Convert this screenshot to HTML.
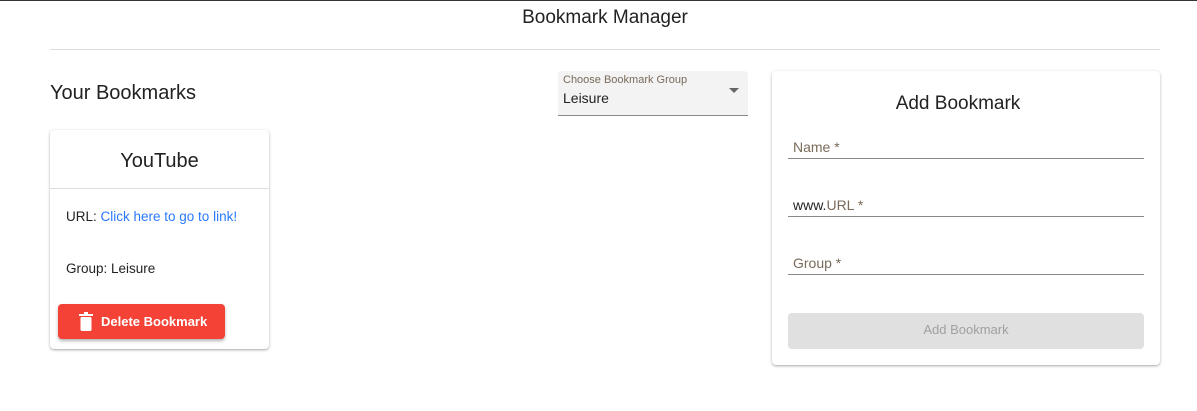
<!DOCTYPE html>
<html><head><style>
*{box-sizing:border-box;margin:0;padding:0}
body{width:1197px;height:411px;background:#fff;font-family:"Liberation Sans",sans-serif;color:#222;position:relative;overflow:hidden;border-top:1px solid #333}
.a{position:absolute}
.card{position:absolute;background:#fff;border-radius:4px;box-shadow:0 1px 3px rgba(0,0,0,.25),0 1px 1px rgba(0,0,0,.12)}
.field{position:absolute;left:16px;width:356px;border-bottom:1px solid #888;font-size:14px;color:#7a6a5a;padding-left:5px;height:20px}
</style></head><body>
<div class="a" style="left:0;width:1210px;top:6px;text-align:center;font-size:19px;color:#222">Bookmark Manager</div>
<div class="a" style="left:50px;width:1110px;top:48px;border-top:1px solid #ddd"></div>
<div class="a" style="left:50px;top:81px;font-size:20px;color:#222">Your Bookmarks</div>
<div class="a" style="left:558px;top:70px;width:190px;height:45px;background:#f3f3f3;border-radius:4px 4px 0 0;border-bottom:1px solid #888"></div>
<div class="a" style="left:563px;top:73px;font-size:11px;color:#7a6a5a">Choose Bookmark Group</div>
<div class="a" style="left:563px;top:89px;font-size:14px;color:#222">Leisure</div>
<div class="a" style="left:729px;top:87px;width:0;height:0;border-left:5px solid transparent;border-right:5px solid transparent;border-top:5px solid #666"></div>
<div class="card" style="left:50px;top:129px;width:219px;height:219px">
<div class="a" style="left:0;width:219px;top:20px;text-align:center;font-size:20px">YouTube</div>
<div class="a" style="left:0;width:219px;top:58px;border-top:1px solid #ddd"></div>
<div class="a" style="left:16px;top:79px;font-size:13.5px">URL: <span style="color:#2979ff">Click here to go to link!</span></div>
<div class="a" style="left:16px;top:131px;font-size:13.5px">Group: Leisure</div>
<div class="a" style="left:8px;top:174px;width:167px;height:35px;background:#f44336;border-radius:4px;box-shadow:0 2px 3px rgba(0,0,0,.3);color:#fff;font-weight:bold;font-size:13px;line-height:35px;padding-left:43px">Delete Bookmark
<svg class="a" style="left:21px;top:8px" width="14" height="19" viewBox="0 0 14 19"><rect x="0" y="2" width="14" height="2" fill="#fff"/><rect x="5" y="0" width="4" height="2" fill="#fff"/><rect x="1.5" y="5" width="11" height="14" rx="1.5" fill="#fff"/></svg>
</div>
</div>
<div class="card" style="left:772px;top:70px;width:388px;height:294px">
<div class="a" style="left:-8px;width:388px;top:22px;text-align:center;font-size:19px">Add Bookmark</div>
<div class="field" style="top:68px">Name *</div>
<div class="field" style="top:126px"><span style="color:#222">www.</span>URL *</div>
<div class="field" style="top:184px">Group *</div>
<div class="a" style="left:16px;top:242px;width:356px;height:36px;background:#e0e0e0;border-radius:4px;text-align:center;line-height:34px;font-size:13px;color:#a0a0a0">Add Bookmark</div>
</div>
</body></html>
